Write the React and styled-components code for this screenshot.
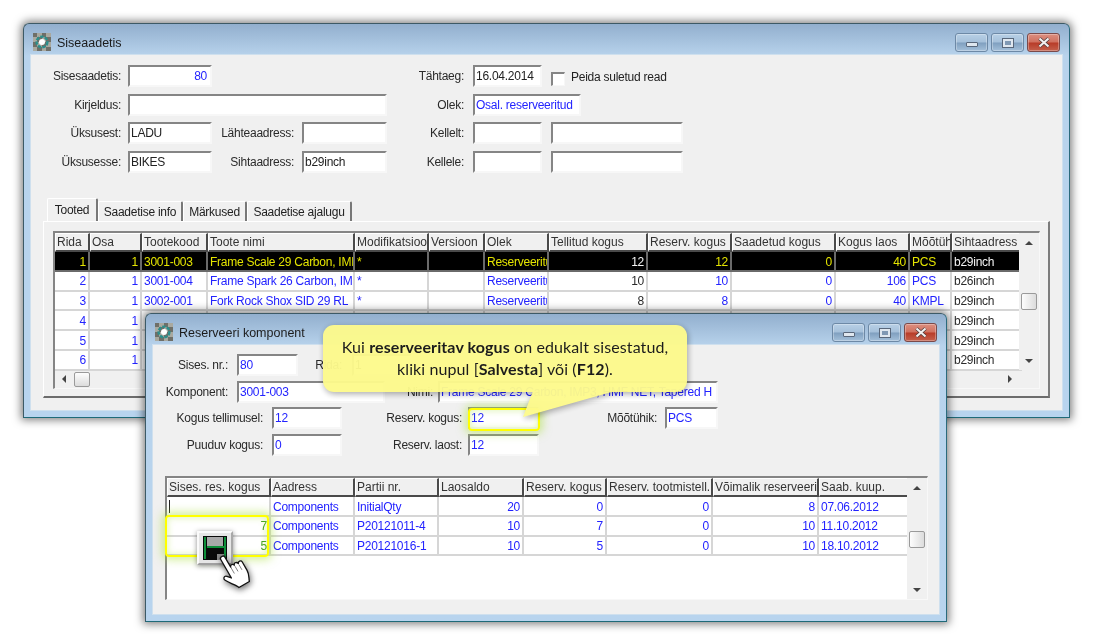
import React from 'react';
import styled, { createGlobalStyle } from 'styled-components';

const GlobalStyle = createGlobalStyle`
  html, body {
    margin: 0;
    padding: 0;
    background: #fff;
  }
  * {
    box-sizing: border-box;
  }
`;

const Desktop = styled.div`
  position: relative;
  width: 1093px;
  height: 644px;
  overflow: hidden;
  background: #fff;
  font-family: "Liberation Sans", Arial, sans-serif;
  font-size: 12px;
  letter-spacing: -0.25px;
  color: #222;
  filter: blur(0.3px);
`;

const Window = styled.section`
  position: absolute;
  left: ${(p) => p.$x}px;
  top: ${(p) => p.$y}px;
  width: ${(p) => p.$w}px;
  height: ${(p) => p.$h}px;
  display: flex;
  flex-direction: column;
  padding: 0 7px 7px;
  border: 1px solid #3d5a66;
  border-bottom-color: #1f6a78;
  border-right-color: #2a6a7c;
  border-radius: 6px 6px 0 0;
  background: linear-gradient(180deg, #92afce 0, #b8d3ec 32px, #b8d4ee 100%);
  box-shadow: 0 0 9px 2px rgba(0, 0, 0, 0.5);
`;

const TitleBar = styled.header`
  height: 31px;
  flex: none;
  display: flex;
  align-items: center;
  gap: 6px;
  padding: 4px 0 0 2px;
  font-size: 12.5px;
  letter-spacing: 0;
  color: #1c1c1c;
`;

const TitleText = styled.span`
  flex: 1;
  margin-top: 2px;
`;

const WinButtons = styled.div`
  display: flex;
  gap: 3px;
  margin-right: 2px;
  margin-top: 2px;
`;

const WinButton = styled.div`
  width: 33px;
  height: 19px;
  display: flex;
  align-items: center;
  justify-content: center;
  border: 1px solid ${(p) => (p.$close ? '#7a4a4a' : '#6d89a6')};
  border-radius: 3px;
  background: ${(p) =>
    p.$close
      ? 'linear-gradient(180deg, #dc8f80 0, #d0705f 48%, #b83b28 52%, #c4604c 100%)'
      : 'linear-gradient(180deg, #b8d0e6 0, #a5c0da 48%, #7f9fbf 52%, #a4c0da 100%)'};
  box-shadow: inset 0 0 0 1px rgba(255, 255, 255, 0.3);
`;

const MinGlyph = styled.i`
  display: block;
  width: 12px;
  height: 5px;
  margin-top: 4px;
  background: #dfe7ef;
  border: 1px solid #59677a;
  border-radius: 1px;
`;

const MaxGlyph = styled.i`
  display: block;
  width: 12px;
  height: 10px;
  padding: 1px;
  border: 1px solid #59677a;
  background: #dfe7ef;
  &::after {
    content: '';
    display: block;
    height: 4px;
    margin: 1px;
    background: #7f98b3;
  }
`;

const CloseGlyph = styled.svg`
  width: 14px;
  height: 11px;
`;

const Client = styled.div`
  flex: 1;
  min-height: 0;
  display: flex;
  flex-direction: column;
  background: #f0f0f0;
  box-shadow: 0 0 0 1px #cfe0ee;
`;

const MainForm = styled.div`
  display: grid;
  grid-template-columns: 97px 84px 90px 85px 86px 69px 9px 132px;
  grid-auto-rows: 22px;
  row-gap: 6.7px;
  padding-top: 10px;
`;

const ReserveForm = styled.div`
  display: grid;
  grid-template-columns: 84px 35px 26px 44px 43px 53px 30px 71px 126px 53px;
  grid-auto-rows: 22px;
  row-gap: 4.7px;
  padding-top: 9px;
`;

const Label = styled.label`
  grid-column: ${(p) => p.$col};
  grid-row: ${(p) => p.$row};
  align-self: center;
  text-align: right;
  padding-right: ${(p) => (p.$pad === undefined ? 7 : p.$pad)}px;
  color: #2a2a2a;
  white-space: nowrap;
`;

const Field = styled.div`
  grid-column: ${(p) => p.$col};
  grid-row: ${(p) => p.$row};
  width: ${(p) => (p.$w ? `${p.$w}px` : 'auto')};
  height: 22px;
  margin-left: ${(p) => p.$ml || 0}px;
  padding: 1px 3px 0 1px;
  line-height: 17px;
  overflow: hidden;
  white-space: nowrap;
  text-align: ${(p) => p.$align || 'left'};
  color: ${(p) => (p.$blue ? '#2323ff' : '#222')};
  background: #fff;
  border: 2px solid #f7f7f7;
  border-top-color: #858585;
  border-left-color: #858585;
`;

const CheckRow = styled.div`
  grid-column: ${(p) => p.$col};
  grid-row: ${(p) => p.$row};
  display: flex;
  align-items: center;
  gap: 6px;
  padding-top: 3px;
`;

const CheckBox = styled.span`
  width: 14px;
  height: 14px;
  margin-top: 2px;
  background: #fff;
  border: 1px solid #f7f7f7;
  border-top: 2px solid #858585;
  border-left: 2px solid #858585;
`;

const CheckText = styled.span`
  margin-top: -2px;
`;

const TabStrip = styled.div`
  display: flex;
  align-items: flex-end;
  height: 23px;
  margin-top: 25px;
  padding-left: 16px;
`;

const Tab = styled.div`
  width: ${(p) => p.$w}px;
  height: ${(p) => (p.$active ? 23 : 20)}px;
  padding-top: ${(p) => (p.$active ? 4 : 3)}px;
  text-align: center;
  color: #222;
  white-space: nowrap;
  background: #f0f0f0;
  border-top: 1px solid #fff;
  border-left: 1px solid #fff;
  border-right: 2px solid #777;
  border-radius: 2px 2px 0 0;
`;

const TabPane = styled.div`
  height: 177px;
  margin: 0 12px;
  padding: 9px 0 0 9px;
  border: 1px solid #fff;
  border-right: 2px solid #7c7c7c;
  border-bottom: 2px solid #6c6c6c;
`;

const ListFrame = styled.div`
  width: ${(p) => p.$w}px;
  height: ${(p) => p.$h}px;
  margin-left: ${(p) => p.$left || 0}px;
  margin-top: ${(p) => p.$top || 0}px;
  display: flex;
  flex-direction: column;
  background: #f0f0f0;
  border: 1px solid #f8f8f8;
  border-top: 2px solid #858585;
  border-left: 2px solid #858585;
`;

const ListBody = styled.div`
  flex: 1;
  min-height: 0;
  display: flex;
`;

const GridArea = styled.div`
  flex: 1;
  min-width: 0;
  display: flex;
  flex-direction: column;
  background: ${(p) => (p.$blank ? '#fff' : 'transparent')};
`;

const GridRow = styled.div`
  display: grid;
  grid-template-columns: ${(p) => p.$cols};
  height: ${(p) => (p.$head ? 19 : 19.75)}px;
  flex: none;
  background: ${(p) => (p.$selected ? '#000' : '#fff')};
`;

const HeadCell = styled.div`
  padding: 0.5px 0 0 1px;
  line-height: 15px;
  letter-spacing: 0;
  overflow: hidden;
  white-space: nowrap;
  color: #333;
  background: #f0f0f0;
  border-top: 1px solid #fff;
  border-left: 1px solid #fff;
  border-right: 2px solid #4a4a4a;
  border-bottom: 2px solid #4a4a4a;
`;

const Cell = styled.div`
  padding: 1.5px ${(p) => (p.$align === 'right' ? 2 : 0)}px 0 2px;
  line-height: 17px;
  overflow: hidden;
  white-space: nowrap;
  text-align: ${(p) => p.$align || 'left'};
  color: ${(p) => p.$color};
  border-right: 2px solid ${(p) => (p.$selected ? '#6a6a6a' : '#d6d6d6')};
  border-bottom: 2px solid ${(p) => (p.$selected ? '#6a6a6a' : '#d6d6d6')};
`;

const VScroll = styled.div`
  width: 20px;
  flex: none;
  display: flex;
  flex-direction: column;
  align-items: center;
  background: #f0f0f0;
`;

const ScrollEnd = styled.div`
  height: 19px;
  width: 100%;
  flex: none;
  display: flex;
  align-items: center;
  justify-content: center;
`;

const VThumb = styled.div`
  width: 16px;
  height: 17px;
  margin-top: ${(p) => p.$top}px;
  margin-bottom: auto;
  border: 1px solid #9a9a9a;
  border-radius: 2px;
  background: linear-gradient(90deg, #fdfdfd, #dcdcdc);
`;

const HScroll = styled.div`
  height: 18px;
  flex: none;
  display: flex;
  align-items: center;
  padding-right: 20px;
`;

const HButton = styled.div`
  width: 18px;
  height: 100%;
  flex: none;
  display: flex;
  align-items: center;
  justify-content: center;
`;

const HThumb = styled.div`
  width: 16px;
  height: 15px;
  margin-left: 1px;
  margin-right: auto;
  border: 1px solid #9a9a9a;
  border-radius: 2px;
  background: linear-gradient(180deg, #fdfdfd, #dcdcdc);
`;

const Arrow = styled.i`
  display: block;
  width: 0;
  height: 0;
  border-style: solid;
  ${(p) => p.$dir === 'up' && 'border-width: 0 4px 4px; border-color: transparent transparent #444;'}
  ${(p) => p.$dir === 'down' && 'border-width: 4px 4px 0; border-color: #444 transparent transparent;'}
  ${(p) => p.$dir === 'left' && 'border-width: 4px 4px 4px 0; border-color: transparent #444 transparent transparent;'}
  ${(p) => p.$dir === 'right' && 'border-width: 4px 0 4px 4px; border-color: transparent transparent transparent #444;'}
`;

const Glow = styled.div`
  position: absolute;
  left: ${(p) => p.$x}px;
  top: ${(p) => p.$y}px;
  width: ${(p) => p.$w}px;
  height: ${(p) => p.$h}px;
  border: 2.5px solid #ffff00;
  border-radius: 4px;
  box-shadow: 0 0 8px 3px rgba(170, 225, 60, 0.5), inset 0 0 6px 1px rgba(170, 225, 60, 0.35);
`;

const Callout = styled.div`
  position: absolute;
  left: 323px;
  top: 325px;
  width: 364px;
  height: 93px;
  opacity: 0.96;
  filter: drop-shadow(1px 2px 3px rgba(0, 0, 0, 0.35));
`;

const CalloutBody = styled.div`
  height: 67px;
  padding-top: 11px;
  border-radius: 11px;
  background: #fdfa8c;
  text-align: center;
  font-family: Lato, "Open Sans", sans-serif;
  font-size: 16px;
  letter-spacing: 0.1px;
  line-height: 22px;
  color: #141414;
  b {
    font-weight: 700;
  }
`;

const CalloutTail = styled.div`
  width: 100%;
  height: 27px;
  margin-top: -1px;
  background: #fdfa8c;
  clip-path: polygon(200px 26px, 210px 0, 292px 0);
`;

const SaveButton = styled.div`
  position: absolute;
  left: 197px;
  top: 531px;
  width: 36px;
  height: 34px;
  display: flex;
  align-items: center;
  justify-content: center;
  background: #e6e6e6;
  border: 2px solid #fafafa;
  border-right-color: #a8a8a8;
  border-bottom-color: #a0a0a0;
  box-shadow: 0 1px 5px rgba(0, 0, 0, 0.45);
`;

const HandCursor = styled.svg`
  position: absolute;
  left: 218px;
  top: 552px;
  width: 36px;
  height: 44px;
  filter: drop-shadow(1px 2px 3px rgba(0, 0, 0, 0.6));
`;

const AppIcon = () => (
  <svg width="18" height="18" viewBox="0 0 18 18">
    <rect width="18" height="18" fill="#a9a9a0" />
    <path d="M0 0h4v4H0zM9 0h4v4H9zM4 4h5v5H4zM13 4h5v5h-5zM0 9h4v5H0zM9 9h4v5H9zM4 14h5v4H4zM13 14h5v4h-5z" fill="#6f6f68" />
    <circle cx="9" cy="9" r="5.4" fill="none" stroke="#2b8f8c" strokeWidth="2.4" strokeDasharray="3.4 1.2" />
    <circle cx="9" cy="9" r="3" fill="#fff" />
  </svg>
);

const WindowControls = () => (
  <WinButtons>
    <WinButton><MinGlyph /></WinButton>
    <WinButton><MaxGlyph /></WinButton>
    <WinButton $close>
      <CloseGlyph viewBox="0 0 14 11">
        <path d="M2.5 1.5 L11.5 9.5 M11.5 1.5 L2.5 9.5" stroke="#4a3a3a" strokeWidth="3.6" />
        <path d="M2.5 1.5 L11.5 9.5 M11.5 1.5 L2.5 9.5" stroke="#f4f0f0" strokeWidth="2.2" />
      </CloseGlyph>
    </WinButton>
  </WinButtons>
);

const BLUE = '#2323ff';
const DARK = '#2a2a2a';
const YELLOW = '#e4e400';
const GREEN = '#3f9f1f';

const productCols = '35px 52px 66px 147px 74px 56px 64px 99px 84px 104px 74px 42px 70px';
const productHead = ['Rida', 'Osa', 'Tootekood', 'Toote nimi', 'Modifikatsioon', 'Versioon', 'Olek', 'Tellitud kogus', 'Reserv. kogus', 'Saadetud kogus', 'Kogus laos', 'Mõõtühik', 'Sihtaadress'];
const productAlign = ['right', 'right', 'left', 'left', 'left', 'left', 'left', 'right', 'right', 'right', 'right', 'left', 'left'];
const products = [
  ['1', '1', '3001-003', 'Frame Scale 29 Carbon, IMP3', '*', '', 'Reserveeritud', '12', '12', '0', '40', 'PCS', 'b29inch'],
  ['2', '1', '3001-004', 'Frame Spark 26 Carbon, IMP3', '*', '', 'Reserveeritud', '10', '10', '0', '106', 'PCS', 'b26inch'],
  ['3', '1', '3002-001', 'Fork Rock Shox SID 29 RL', '*', '', 'Reserveeritud', '8', '8', '0', '40', 'KMPL', 'b29inch'],
  ['4', '1', '', '', '', '', '', '', '', '', '', '', 'b29inch'],
  ['5', '1', '', '', '', '', '', '', '', '', '', '', 'b29inch'],
  ['6', '1', '', '', '', '', '', '', '', '', '', '', 'b29inch'],
];

const productColor = (col, selected) => {
  if (col === 7 || col === 12) return selected ? '#f4f4f4' : DARK;
  return selected ? YELLOW : BLUE;
};

const stockCols = '104px 84px 84px 85px 83px 106px 106px 90px';
const stockHead = ['Sises. res. kogus', 'Aadress', 'Partii nr.', 'Laosaldo', 'Reserv. kogus', 'Reserv. tootmistell.', 'Võimalik reserveeride', 'Saab. kuup.'];
const stockAlign = ['right', 'left', 'left', 'right', 'right', 'right', 'right', 'left'];
const stock = [
  ['', 'Components', 'InitialQty', '20', '0', '0', '8', '07.06.2012'],
  ['7', 'Components', 'P20121011-4', '10', '7', '0', '10', '11.10.2012'],
  ['5', 'Components', 'P20121016-1', '10', '5', '0', '10', '18.10.2012'],
];

const Caret = styled.span`
  display: block;
  width: 1px;
  height: 13px;
  margin-top: 1px;
  background: #222;
`;

export default function App() {
  return (
    <Desktop>
      <GlobalStyle />

      <Window $x={23} $y={23} $w={1047} $h={395}>
        <TitleBar>
          <AppIcon />
          <TitleText>Siseaadetis</TitleText>
          <WindowControls />
        </TitleBar>
        <Client>
          <MainForm>
            <Label $col="1" $row="1">Sisesaadetis:</Label>
            <Field $col="2" $row="1" $align="right" $blue>80</Field>
            <Label $col="5" $row="1" $pad={9}>Tähtaeg:</Label>
            <Field $col="6" $row="1">16.04.2014</Field>
            <CheckRow $col="8" $row="1">
              <CheckBox />
              <CheckText>Peida suletud read</CheckText>
            </CheckRow>

            <Label $col="1" $row="2">Kirjeldus:</Label>
            <Field $col="2 / 5" $row="2" />
            <Label $col="5" $row="2" $pad={9}>Olek:</Label>
            <Field $col="6 / 9" $row="2" $w={108} $blue>Osal. reserveeritud</Field>

            <Label $col="1" $row="3">Üksusest:</Label>
            <Field $col="2" $row="3">LADU</Field>
            <Label $col="3" $row="3" $pad={8}>Lähteaadress:</Label>
            <Field $col="4" $row="3" />
            <Label $col="5" $row="3" $pad={9}>Kellelt:</Label>
            <Field $col="6" $row="3" />
            <Field $col="8" $row="3" />

            <Label $col="1" $row="4">Üksusesse:</Label>
            <Field $col="2" $row="4">BIKES</Field>
            <Label $col="3" $row="4" $pad={8}>Sihtaadress:</Label>
            <Field $col="4" $row="4">b29inch</Field>
            <Label $col="5" $row="4" $pad={9}>Kellele:</Label>
            <Field $col="6" $row="4" />
            <Field $col="8" $row="4" />
          </MainForm>

          <TabStrip>
            <Tab $active $w={51}>Tooted</Tab>
            <Tab $w={85}>Saadetise info</Tab>
            <Tab $w={64}>Märkused</Tab>
            <Tab $w={105}>Saadetise ajalugu</Tab>
          </TabStrip>
          <TabPane>
            <ListFrame $w={987} $h={158}>
              <ListBody>
                <GridArea>
                  <GridRow $head $cols={productCols}>
                    {productHead.map((h) => <HeadCell key={h}>{h}</HeadCell>)}
                  </GridRow>
                  {products.map((row, r) => (
                    <GridRow key={row[0]} $cols={productCols} $selected={r === 0}>
                      {row.map((v, c) => (
                        <Cell key={c} $selected={r === 0} $align={productAlign[c]} $color={productColor(c, r === 0)}>{v}</Cell>
                      ))}
                    </GridRow>
                  ))}
                </GridArea>
                <VScroll>
                  <ScrollEnd><Arrow $dir="up" /></ScrollEnd>
                  <VThumb $top={41} />
                  <ScrollEnd><Arrow $dir="down" /></ScrollEnd>
                </VScroll>
              </ListBody>
              <HScroll>
                <HButton><Arrow $dir="left" /></HButton>
                <HThumb />
                <HButton><Arrow $dir="right" /></HButton>
              </HScroll>
            </ListFrame>
          </TabPane>
        </Client>
      </Window>

      <Window $x={145} $y={313} $w={802} $h={309}>
        <TitleBar>
          <AppIcon />
          <TitleText>Reserveeri komponent</TitleText>
          <WindowControls />
        </TitleBar>
        <Client>
          <ReserveForm>
            <Label $col="1" $row="1" $pad={9}>Sises. nr.:</Label>
            <Field $col="2 / 4" $row="1" $blue>80</Field>
            <Label $col="4" $row="1" $pad={0}>Rida:</Label>
            <Field $col="5 / 7" $row="1" $w={60} $ml={10}>1</Field>

            <Label $col="1" $row="2" $pad={9}>Komponent:</Label>
            <Field $col="2 / 6" $row="2" $blue>3001-003</Field>
            <Label $col="6" $row="2" $pad={5}>Nimi:</Label>
            <Field $col="7 / 11" $row="2" $blue>Frame Scale 29 Carbon, IMP3, HMF NET, Tapered H</Field>

            <Label $col="1 / 3" $row="3" $pad={9}>Kogus tellimusel:</Label>
            <Field $col="3 / 5" $row="3" $blue>12</Field>
            <Label $col="5 / 8" $row="3" $pad={6}>Reserv. kogus:</Label>
            <Field $col="8" $row="3" $blue>12</Field>
            <Label $col="9" $row="3" $pad={8}>Mõõtühik:</Label>
            <Field $col="10" $row="3" $blue>PCS</Field>

            <Label $col="1 / 3" $row="4" $pad={9}>Puuduv kogus:</Label>
            <Field $col="3 / 5" $row="4" $blue>0</Field>
            <Label $col="5 / 8" $row="4" $pad={6}>Reserv. laost:</Label>
            <Field $col="8" $row="4" $blue>12</Field>
          </ReserveForm>

          <ListFrame $w={763} $h={124} $left={12} $top={20}>
            <ListBody>
              <GridArea $blank>
                <GridRow $head $cols={stockCols}>
                  {stockHead.map((h) => <HeadCell key={h}>{h}</HeadCell>)}
                </GridRow>
                {stock.map((row) => (
                  <GridRow key={row[2]} $cols={stockCols}>
                    {row.map((v, c) =>
                      c === 0 ? (
                        <Cell key={c} $align={v ? 'right' : 'left'} $color={GREEN}>{v || <Caret />}</Cell>
                      ) : (
                        <Cell key={c} $align={stockAlign[c]} $color={BLUE}>{v}</Cell>
                      )
                    )}
                  </GridRow>
                ))}
              </GridArea>
              <VScroll>
                <ScrollEnd><Arrow $dir="up" /></ScrollEnd>
                <VThumb $top={34} />
                <ScrollEnd><Arrow $dir="down" /></ScrollEnd>
              </VScroll>
            </ListBody>
          </ListFrame>
        </Client>
      </Window>

      <Glow $x={468} $y={408} $w={72} $h={23} />
      <Glow $x={165} $y={515} $w={104} $h={42} />

      <Callout>
        <CalloutBody>
          Kui <b>reserveeritav kogus</b> on edukalt sisestatud,<br />
          kliki nupul [<b>Salvesta</b>] või (<b>F12</b>).
        </CalloutBody>
        <CalloutTail />
      </Callout>

      <SaveButton>
        <svg width="24" height="24" viewBox="0 0 24 24">
          <rect width="24" height="24" fill="#0a0a0a" />
          <rect x="1" y="1" width="2" height="22" fill="#0f8f3a" />
          <rect x="21" y="1" width="2" height="22" fill="#0f8f3a" />
          <rect x="4" y="1" width="16" height="9" fill="#a9a9a9" />
          <rect x="4" y="10" width="17" height="2" fill="#0f8f3a" />
          <rect x="14" y="18" width="7" height="6" fill="#8a8a8a" />
        </svg>
      </SaveButton>

      <HandCursor viewBox="0 0 36 44">
        <g transform="translate(-6.9 10) scale(1.2) rotate(-30)">
          <path
            d="M8 2c0-2 4-2 4 0v10c0-2 3-2 3.5 0c0-2 3-2 3.5.5c.5-2 3.5-1.5 3.5.5v8c0 4-2 6-3 9H9.5c-1-3-5-7-7-11c-1-2 1-4 3-2l2.5 3z"
            fill="#fff"
            stroke="#111"
            strokeWidth="1.1"
            strokeLinejoin="round"
          />
          <path d="M12 12v6M15.5 13v5M19 13.5v5" stroke="#777" strokeWidth="0.7" fill="none" />
        </g>
      </HandCursor>
    </Desktop>
  );
}
